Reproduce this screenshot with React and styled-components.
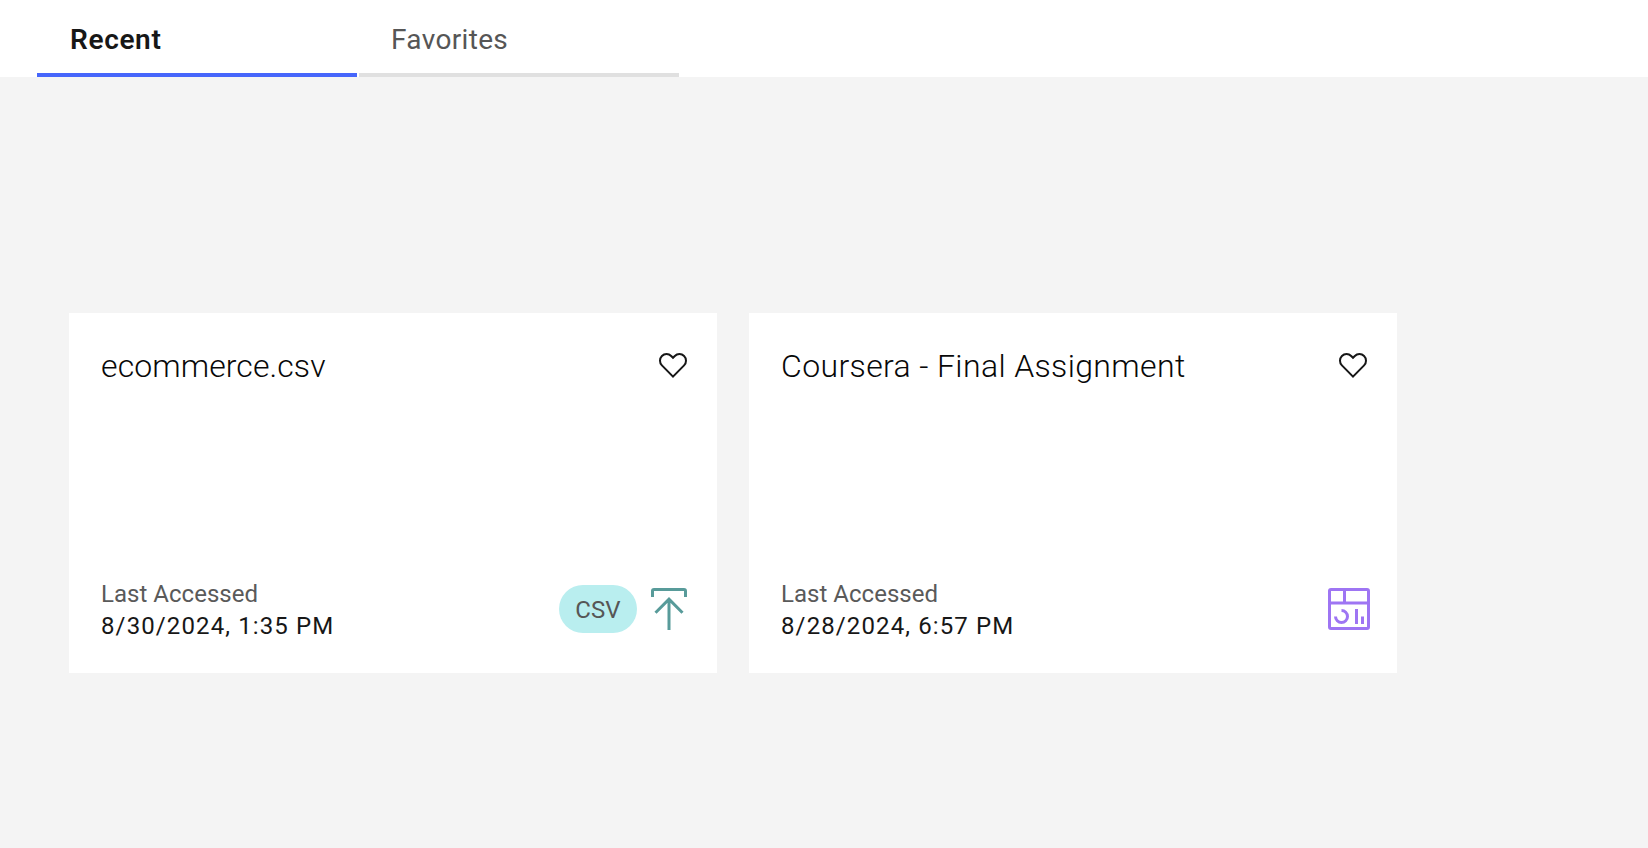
import React from 'react';
import styled, { createGlobalStyle } from 'styled-components';

const GlobalStyle = createGlobalStyle`
  * { box-sizing: border-box; }
  body {
    margin: 0;
    background: #f4f4f4;
    color: #171717;
    font-family: Roboto, "Liberation Sans", sans-serif;
  }
`;

const Page = styled.div`
  min-height: 848px;
  background: #f4f4f4;
`;

const TabBar = styled.nav`
  display: flex;
  gap: 2px;
  height: 77px;
  padding-left: 37px;
  background: #fff;
`;

const Tab = styled.button`
  width: 320px;
  height: 77px;
  padding: 6px 32px 0 ${(p) => (p.$active ? '33px' : '32px')};
  border: 0;
  border-bottom: 4px solid ${(p) => (p.$active ? '#4666fb' : '#e0e0e0')};
  background: transparent;
  color: ${(p) => (p.$active ? '#171717' : '#565656')};
  font: ${(p) => (p.$active ? 600 : 400)} 28px/36px Roboto, sans-serif;
  letter-spacing: ${(p) => p.$tracking};
  text-align: left;
`;

const CardList = styled.main`
  display: flex;
  gap: 32px;
  padding: 236px 69px 0;
`;

const Card = styled.article`
  display: flex;
  flex-direction: column;
  justify-content: space-between;
  width: 648px;
  height: 360px;
  padding: 32px 24px 31px 32px;
  background: #fff;
`;

const CardHeader = styled.header`
  display: flex;
  justify-content: space-between;
  padding: 0 4px 0 0;
`;

const Title = styled.h2`
  margin: 0;
  color: #080808;
  font-size: 32px;
  font-weight: 300;
  line-height: 42px;
  letter-spacing: ${(p) => p.$tracking};
  white-space: nowrap;
`;

const FavoriteButton = styled.button`
  display: flex;
  height: 32px;
  margin-top: 4px;
  padding: 0;
  border: 0;
  background: transparent;
  color: #171717;
`;

const CardFooter = styled.footer`
  display: flex;
  justify-content: space-between;
  align-items: flex-start;
`;

const Access = styled.div`
  display: flex;
  flex-direction: column;
  margin-top: -7px;
  font-size: 24px;
  line-height: 32px;
  white-space: nowrap;
`;

const AccessLabel = styled.span`
  color: #5a5a5a;
  letter-spacing: 0.03px;
`;

const AccessTime = styled.span`
  letter-spacing: 1.12px;
`;

const TypeGroup = styled.div`
  display: flex;
  gap: 8px;
  margin-bottom: 8px;
`;

const Tag = styled.span`
  display: flex;
  align-items: center;
  justify-content: center;
  width: 78px;
  height: 48px;
  padding-top: 2px;
  border-radius: 24px;
  background: #b9eeef;
  color: #565656;
  font-size: 24px;
  line-height: 32px;
  letter-spacing: 0.1px;
`;

const HeartIcon = () => (
  <svg width="32" height="32" viewBox="0 0 32 32" fill="currentColor">
    <path d="M22.45,6a5.47,5.47,0,0,1,3.91,1.64,5.7,5.7,0,0,1,0,8L16,26.13,5.64,15.64a5.7,5.7,0,0,1,0-8,5.48,5.48,0,0,1,7.82,0L16,10.24l2.53-2.58A5.44,5.44,0,0,1,22.45,6m0-2a7.47,7.47,0,0,0-5.34,2.24L16,7.36,14.89,6.24a7.49,7.49,0,0,0-10.68,0,7.72,7.72,0,0,0,0,10.82L16,29,27.79,17.06a7.72,7.72,0,0,0,0-10.82A7.49,7.49,0,0,0,22.45,4Z" />
  </svg>
);

const UploadIcon = () => (
  <svg width="48" height="48" viewBox="0 0 48 48" fill="none" stroke="#589b9a" strokeWidth="3">
    <path d="M7.5 12V6a1.5 1.5 0 0 1 1.5-1.5h30A1.5 1.5 0 0 1 40.5 6v6" />
    <path d="M24 45V14M10.5 27.7 24 14.2l13.5 13.5" />
  </svg>
);

const DashboardIcon = () => (
  <svg width="48" height="48" viewBox="0 0 48 48" fill="none" stroke="#9e75f3" strokeWidth="3">
    <rect x="4.5" y="4.5" width="39" height="39" rx="1.5" />
    <path d="M4.5 18h39M19.5 4.5V18M31.5 24v15M37.5 31.5V39" />
    <path d="M16.5 25.5a6 6 0 1 1-6 6" />
  </svg>
);

const items = [
  { title: 'ecommerce.csv', tracking: '0.08px', time: '8/30/2024, 1:35 PM', tag: 'CSV', Icon: UploadIcon },
  { title: 'Coursera - Final Assignment', tracking: '0.37px', time: '8/28/2024, 6:57 PM', Icon: DashboardIcon },
];

export default function App() {
  return (
    <Page>
      <GlobalStyle />
      <TabBar>
        <Tab $active $tracking="0.65px">Recent</Tab>
        <Tab $tracking="0.33px">Favorites</Tab>
      </TabBar>
      <CardList>
        {items.map(({ title, tracking, time, tag, Icon }) => (
          <Card key={title}>
            <CardHeader>
              <Title $tracking={tracking}>{title}</Title>
              <FavoriteButton aria-label="Add to favorites"><HeartIcon /></FavoriteButton>
            </CardHeader>
            <CardFooter>
              <Access>
                <AccessLabel>Last Accessed</AccessLabel>
                <AccessTime>{time}</AccessTime>
              </Access>
              <TypeGroup>
                {tag && <Tag>{tag}</Tag>}
                <Icon />
              </TypeGroup>
            </CardFooter>
          </Card>
        ))}
      </CardList>
    </Page>
  );
}
